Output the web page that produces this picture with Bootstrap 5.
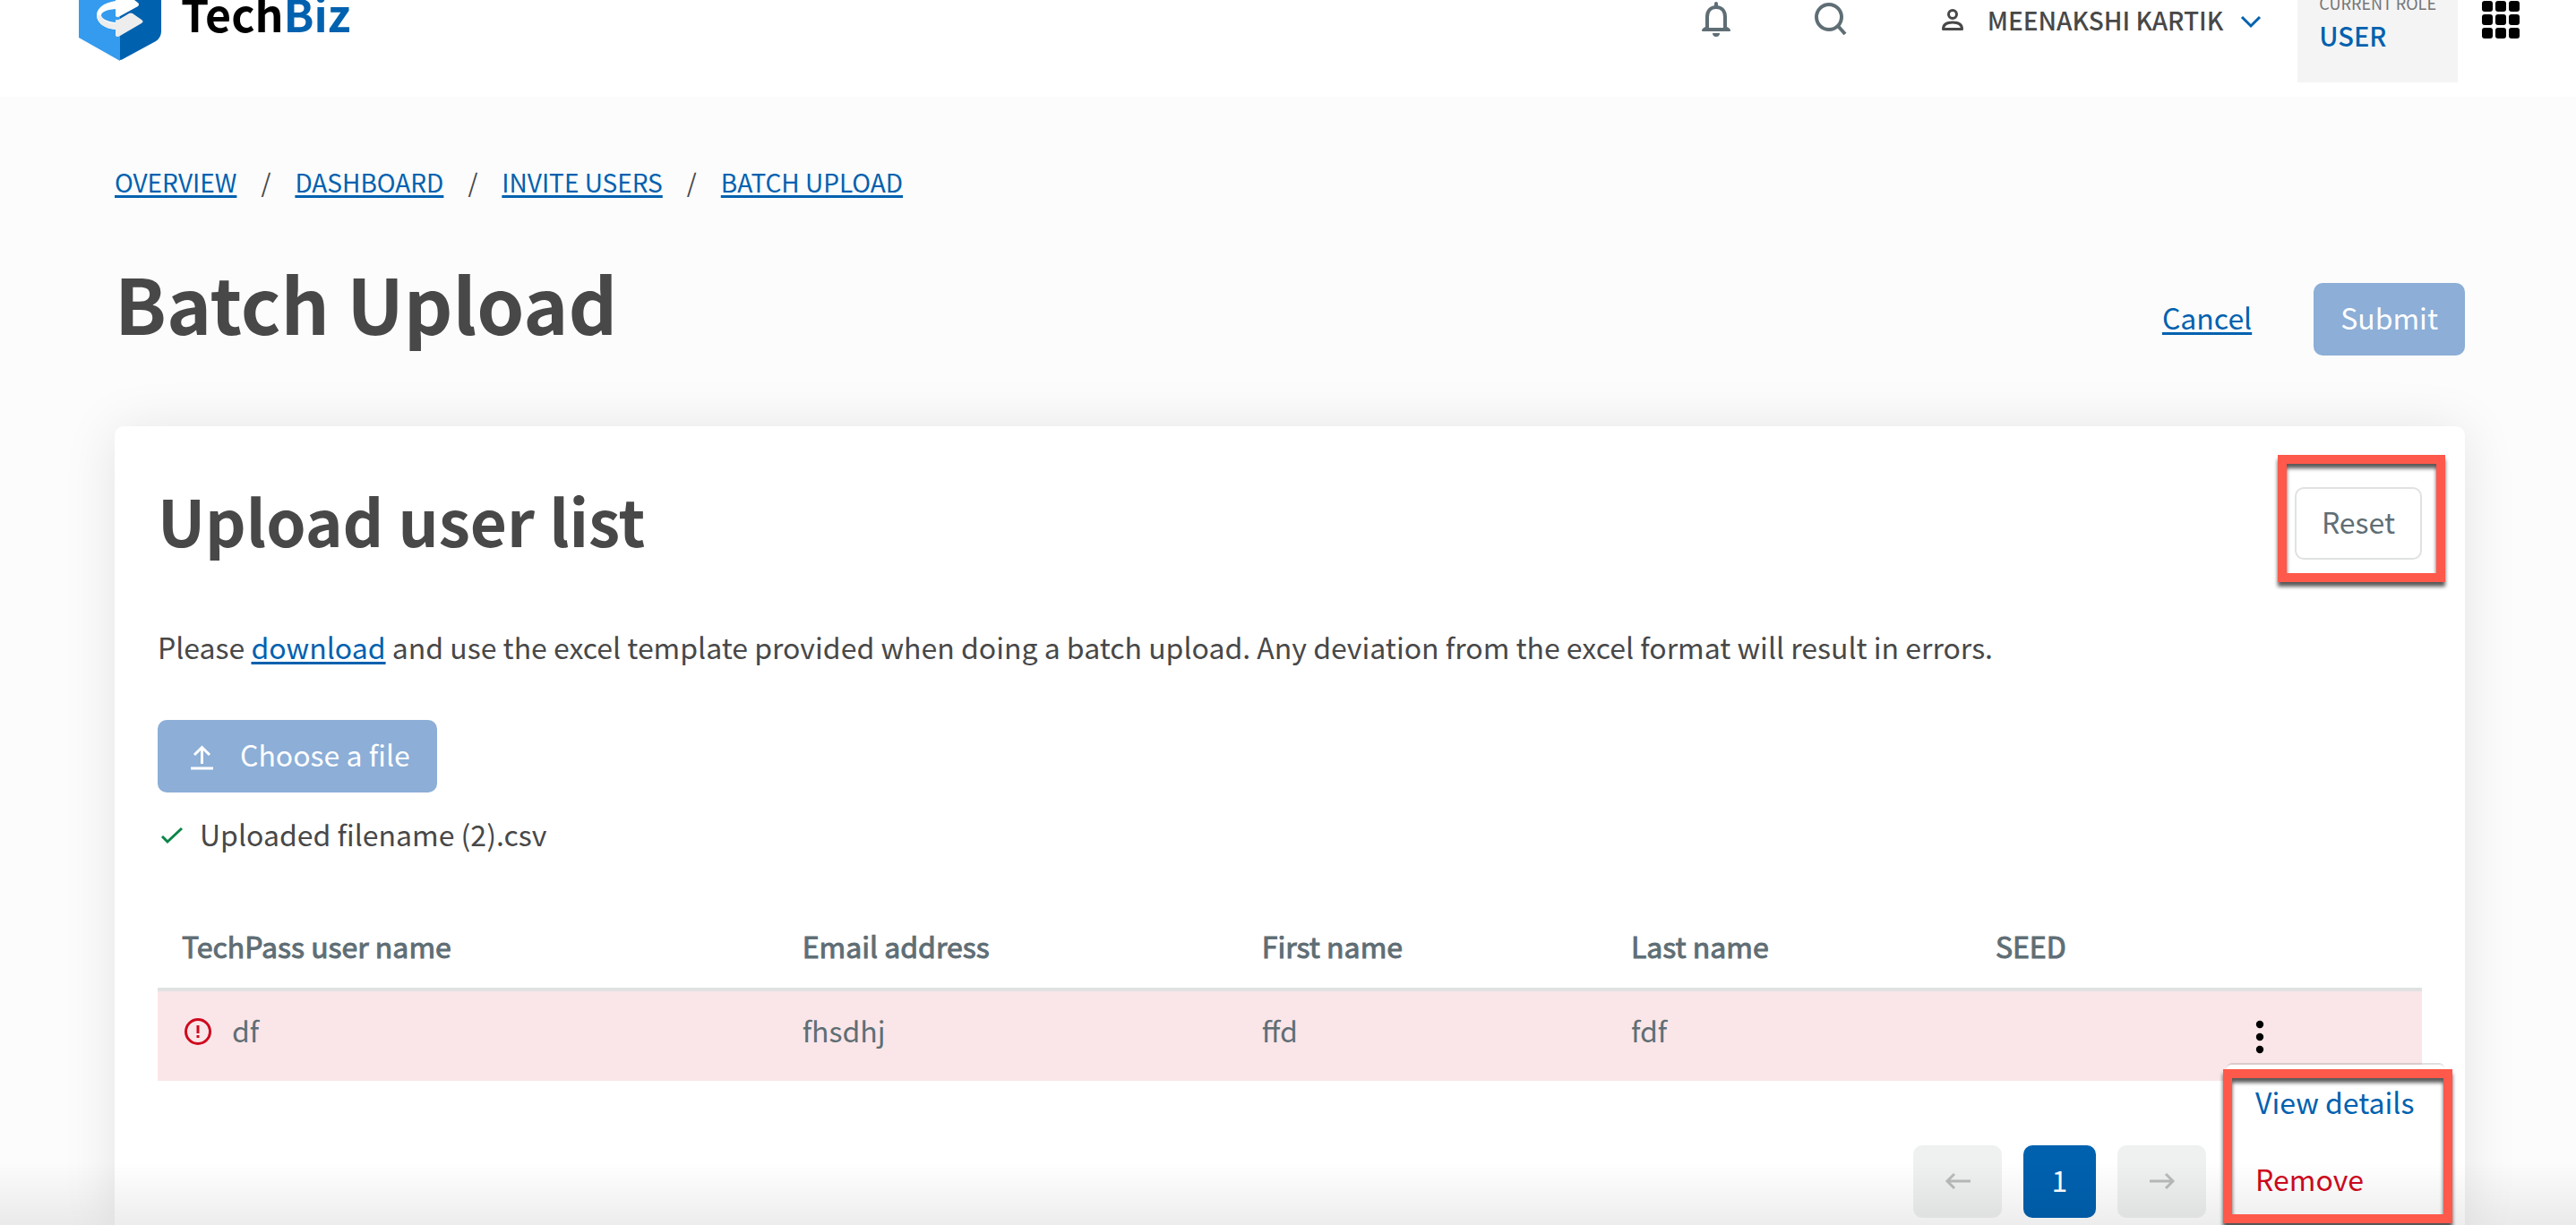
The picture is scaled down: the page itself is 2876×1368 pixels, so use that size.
<!DOCTYPE html>
<html lang="en">
<head>
<meta charset="utf-8">
<meta name="viewport" content="width=device-width, initial-scale=1">
<title>Batch Upload - TechBiz</title>
<link href="https://cdn.jsdelivr.net/npm/bootstrap@5.3.0/dist/css/bootstrap.min.css" rel="stylesheet">
<style>
:root{--tb-blue:#0061af;--tb-text:#484848;--tb-slate:#5f6e75;--tb-red:#cf0a1e;--tb-line:#e0e2e2}
body{font-family:"Noto Sans CJK SC","Noto Sans",sans-serif;font-size:32px;line-height:48px;color:var(--tb-text);background:#fcfcfc}
a{color:var(--tb-blue);text-underline-offset:3px;text-decoration-thickness:3px}
svg{display:block;flex:none;overflow:visible}
.icon-btn{border:0;background:none;padding:0;color:var(--tb-slate)}
.semi{-webkit-text-stroke:1px currentColor}

/* top bar */
.topbar{height:108px;flex:none;padding:0 62px 0 88px;background:#fff}
.brand{gap:22px;font-size:50px;line-height:28px;font-weight:700;color:#000;text-decoration:none}
.brand span span{color:var(--tb-blue)}
.tools{gap:94px}
.account{gap:27px;margin-left:12px;font-size:28px;line-height:44px;font-weight:500;color:var(--tb-text)}
.account .name-part{gap:20px}
.role-box{height:92px;padding:0 24px;margin:0 26px 0 41px;background:#f4f4f4}
.role-label{font-size:18px;line-height:6px;color:#757575;white-space:nowrap}
.role-name{font-size:29px;line-height:66px;font-weight:500;color:var(--tb-blue)}
.t-2{margin-top:2px}.t-10{margin-top:10px}.t-18{margin-top:18px}

/* page head */
.page{padding:71px 124px 0 128px;min-height:0}
.crumbs{font-size:28px;gap:27px;margin:0 0 58px}
.page-title{font-size:85px;line-height:104px;font-weight:700;margin:0 0 8px}
.head-actions{gap:69px}
.btn{--bs-btn-font-size:32px;--bs-btn-line-height:48px;--bs-btn-padding-x:30px;--bs-btn-border-radius:10px;--bs-btn-border-width:0;--bs-btn-disabled-opacity:1;padding-top:14px;padding-bottom:19px}
.btn-primary{--bs-btn-disabled-bg:#8caed7;--bs-btn-disabled-color:#fff;--bs-btn-bg:var(--tb-blue)}
.cancel{margin-bottom:19px}

/* panel */
.panel{margin-top:79px;padding:68px 48px 0;background:#fff;border-radius:10px 10px 0 0;box-shadow:0 4px 60px rgba(0,0,0,.1)}
.panel-title{font-size:71px;line-height:72px;font-weight:700}
.btn-reset{--bs-btn-color:var(--tb-slate);--bs-btn-border-color:var(--tb-line);--bs-btn-border-width:2px;padding:12px 28px 17px}
.intro{margin:73px 0 58px}
.choose{gap:30px;padding-left:37px}
.uploaded{gap:19px;padding-left:4px;margin:22px 0 56px}

/* table */
.users{--bs-table-bg:transparent;color:var(--tb-slate);table-layout:fixed;border-collapse:separate;border-spacing:0}
.users>thead>tr>th{padding:21px 27px 23px;font-weight:400;border-bottom:4px solid var(--tb-line)}
.users>tbody>tr>td{padding:19px 27px 33px;border:0;background:#fae6e8}
.users .c1{width:27.4%}.users .c2{width:20.3%}.users .c3{width:16.3%}.users .c4{width:16.1%}.users .c5{width:11.4%}

/* pagination */
.pager{gap:24px;margin:72px 241px 0 0}
.pager-btn{width:99px;--bs-btn-disabled-bg:#eff1f1;--bs-btn-disabled-color:#b9bbbb}
.pager-num{width:81px;padding-left:0;padding-right:0}

/* row menu and callout frames */
.row-menu{position:absolute;left:-30px;top:61px;width:243px;height:190px;padding:17px 32px;background:#fff;background-clip:padding-box;border-top:2px solid rgba(0,0,0,.12);border-radius:6px 6px 0 0}
.row-menu ul{gap:38px}
.row-menu button{border:0;background:none;padding:0;white-space:nowrap;color:var(--tb-blue)}
.row-menu .danger{color:var(--tb-red)}
.frame{position:absolute;border:10px solid #ff594b;filter:drop-shadow(0 5px 2px rgba(0,0,0,.65));pointer-events:none;z-index:2}
.frame-reset{inset:-36px -26px -25px -19px}
.frame-menu{inset:5px -9px 11px -4px}
.edge-fade{height:70px;background:linear-gradient(transparent,rgba(0,0,0,.07));pointer-events:none;z-index:1}
</style>
</head>
<body class="vh-100 overflow-hidden d-flex flex-column">
<header class="topbar d-flex justify-content-between align-items-start">
  <a class="brand d-flex" href="#">
    <svg width="92" height="68" viewBox="0 0 92 68" aria-hidden="true">
      <path fill="#349bee" d="M0 0h46v68L0 42z"/>
      <path fill="#0061af" d="M46 0h46v35q0 7-6 11L51 65q-3 2-5 2z"/>
      <path fill="#fff" d="M41 0h21l4 3q2 2 0 4L46 18q-3 2-5 0v-8C30 11 25 14 25 17c0 3 5 7 16 8v8C28 32 20 25 20 17 20 9 28 3 41 1z"/>
      <path fill="#ededed" d="M20 17h5c0 4 6 9 16 9v-4q3 1 5-1l10-6q2-1 4 0l10 7q3 2 0 4L46 40q-3 2-5 0v-7C28 32 20 25 20 17z"/>
    </svg>
    <span>Tech<span>Biz</span></span>
  </a>
  <nav class="d-flex align-items-start" aria-label="Account">
    <div class="tools d-flex align-items-start">
      <button class="icon-btn t-2" type="button" aria-label="Notifications">
        <svg width="32" height="39" viewBox="0 0 32 39" fill="none" stroke="currentColor" stroke-width="4"><path d="M6 31V17c0-7 4-11 10-11s10 4 10 11v14"/><path d="M16 6V2" stroke-linecap="round"/><path d="M0 32c0-2 2-3 4-4h24c2 1 4 2 4 4 0 1-1 1-2 1H2c-1 0-2 0-2-1z" fill="currentColor" stroke="none"/><path d="M8 26h16v3H8z" fill="#fff" stroke="none"/><path d="M12 35h8c0 2-1 4-4 4s-4-2-4-4z" fill="currentColor" stroke="none"/></svg>
      </button>
      <button class="icon-btn t-2" type="button" aria-label="Search">
        <svg width="36" height="38" viewBox="0 0 36 38" fill="none" stroke="currentColor" stroke-width="4"><circle cx="16" cy="17" r="14"/><path d="M26 27l8 9"/></svg>
      </button>
      <button class="icon-btn account d-flex align-items-start" type="button">
        <svg class="t-10" width="24" height="24" viewBox="0 0 24 24" fill="none" stroke="currentColor" stroke-width="3"><circle cx="12" cy="6" r="4.500"/><path d="M1.500 22.500c0-5 4-7.500 10.500-7.500s10.500 2.500 10.500 7.500z" stroke-linejoin="round"/></svg>
        <span class="name-part d-flex"><span class="text-nowrap">MEENAKSHI KARTIK</span>
        <svg class="t-18" width="22" height="13" viewBox="0 0 22 13" fill="none" stroke="#0061af" stroke-width="3"><path d="M1 1l10 10L21 1"/></svg></span>
      </button>
    </div>
    <div class="role-box"><div class="role-label">CURRENT ROLE</div><div class="role-name">USER</div></div>
    <button class="icon-btn" type="button" aria-label="Apps">
      <svg width="44" height="43" viewBox="0 0 44 43" fill="#000"><g id="apps-row"><rect x="1" y="1" width="12" height="12" rx="3"/><rect x="16" y="1" width="12" height="12" rx="3"/><rect x="31" y="1" width="12" height="12" rx="3"/></g><use href="#apps-row" y="15"/><use href="#apps-row" y="30"/></svg>
    </button>
  </nav>
</header>

<main class="page flex-fill d-flex flex-column">
  <nav aria-label="Breadcrumb">
    <ol class="crumbs list-unstyled d-flex">
      <li><a href="#">OVERVIEW</a></li><li aria-hidden="true">/</li>
      <li><a href="#">DASHBOARD</a></li><li aria-hidden="true">/</li>
      <li><a href="#">INVITE USERS</a></li><li aria-hidden="true">/</li>
      <li><a href="#">BATCH UPLOAD</a></li>
    </ol>
  </nav>
  <div class="d-flex justify-content-between align-items-end">
    <h1 class="page-title">Batch Upload</h1>
    <div class="head-actions d-flex align-items-end">
      <a class="cancel" href="#">Cancel</a>
      <button class="btn btn-primary" type="button" disabled>Submit</button>
    </div>
  </div>

  <section class="panel flex-fill">
    <div class="d-flex justify-content-between align-items-start">
      <h2 class="panel-title m-0">Upload user list</h2>
      <div class="position-relative">
        <button class="btn btn-reset" type="button">Reset</button>
        <div class="frame frame-reset"></div>
      </div>
    </div>
    <p class="intro">Please <a href="#">download</a> and use the excel template provided when doing a batch upload. Any deviation from the excel format will result in errors.</p>
    <button class="btn btn-primary choose d-flex align-items-center" type="button" disabled>
      <svg class="mt-2" width="25" height="28" viewBox="0 0 25 28" fill="none" stroke="currentColor" stroke-width="3"><path d="M12.500 21V3M4 11l8.500-8.500L21 11M0 26h25"/></svg>
      Choose a file
    </button>
    <div class="uploaded d-flex align-items-center">
      <svg class="mt-1" width="24" height="20" viewBox="0 0 24 20" fill="none" stroke="#0a8548" stroke-width="3"><path d="M1 11l6 6L23 2"/></svg>
      Uploaded filename (2).csv
    </div>

    <table class="users table m-0">
      <thead><tr class="semi">
        <th class="c1" scope="col">TechPass user name</th><th class="c2" scope="col">Email address</th><th class="c3" scope="col">First name</th><th class="c4" scope="col">Last name</th><th class="c5" scope="col">SEED</th><th></th>
      </tr></thead>
      <tbody><tr>
        <td><div class="d-flex align-items-center gap-4">
          <svg class="mt-1" width="32" height="32" viewBox="0 0 32 32" fill="none" stroke="#cf0a1e" stroke-width="3"><circle cx="18" cy="16" r="13.500"/><path d="M18 9v9M18 20v3"/></svg>
          df</div></td>
        <td>fhsdhj</td><td>ffd</td><td>fdf</td><td></td>
        <td><div class="position-relative">
          <button class="icon-btn d-block" type="button" aria-label="Row actions" aria-expanded="true">
            <svg width="14" height="48" viewBox="0 0 14 48" fill="#000"><circle cx="7" cy="18" r="4.200"/><circle cx="7" cy="32" r="4.200"/><circle cx="7" cy="46" r="4.200"/></svg>
          </button>
          <div class="row-menu">
            <ul class="list-unstyled d-flex flex-column m-0">
              <li><button class="d-block" type="button">View details</button></li>
              <li><button class="danger d-block" type="button">Remove</button></li>
            </ul>
            <div class="frame frame-menu"></div>
          </div>
        </div></td>
      </tr></tbody>
    </table>

    <nav class="pager d-flex justify-content-end" aria-label="Pages">
      <button class="btn pager-btn d-flex align-items-center justify-content-center" type="button" disabled aria-label="Previous">
        <svg class="mt-1" width="28" height="18" viewBox="0 0 28 18" fill="none" stroke="currentColor" stroke-width="3"><path d="M28 9H2M10 1L2 9l8 8"/></svg>
      </button>
      <button class="btn btn-primary pager-num" type="button" aria-current="page">1</button>
      <button class="btn pager-btn d-flex align-items-center justify-content-center" type="button" disabled aria-label="Next">
        <svg class="mt-1" width="28" height="18" viewBox="0 0 28 18" fill="none" stroke="currentColor" stroke-width="3"><path d="M0 9h26M18 1l8 8-8 8"/></svg>
      </button>
    </nav>
  </section>
</main>
<div class="edge-fade fixed-bottom"></div>
<script src="https://cdn.jsdelivr.net/npm/bootstrap@5.3.0/dist/js/bootstrap.bundle.min.js"></script>
</body>
</html>
